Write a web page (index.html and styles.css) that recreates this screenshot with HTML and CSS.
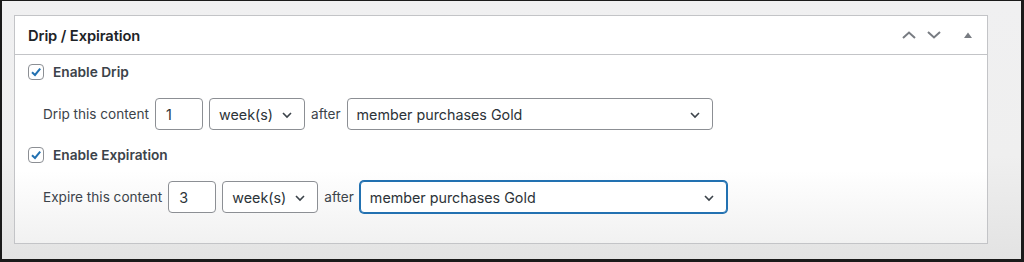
FILE: index.html
```html
<!DOCTYPE html>
<html>
<head>
<meta charset="utf-8">
<link rel="stylesheet" href="styles.css">
</head>
<body>
<div class="frame">
  <div class="panel">
    <div class="panel-header">
      <h2 class="panel-title">Drip / Expiration</h2>
      <div class="panel-actions">
        <svg class="icon-chev" width="16" height="10" viewBox="0 0 16 10"><path d="M2 8 L8 2.5 L14 8" fill="none" stroke="#787c82" stroke-width="2"/></svg>
        <svg class="icon-chev" width="16" height="10" viewBox="0 0 16 10"><path d="M2 2 L8 7.5 L14 2" fill="none" stroke="#787c82" stroke-width="2"/></svg>
        <svg class="icon-tri" width="10" height="8" viewBox="0 0 10 8"><path d="M1 7 L5 1.5 L9 7 Z" fill="#787c82"/></svg>
      </div>
    </div>
    <div class="panel-body">
      <label class="check-row">
        <span class="checkbox"><svg width="12" height="12" viewBox="0 0 12 12"><path d="M2 6.2 L5 9 L10.2 2.6" fill="none" stroke="#2271b1" stroke-width="2"/></svg></span>
        <span class="check-label">Enable Drip</span>
      </label>
      <div class="field-row row-drip">
        <span class="field-text">Drip this content</span>
        <span class="num-input">1</span>
        <span class="select select-unit">week(s)<svg class="sel-arrow" width="12" height="8" viewBox="0 0 12 8"><path d="M2 2 L6 6 L10 2" fill="none" stroke="#3c434a" stroke-width="1.6"/></svg></span>
        <span class="field-text">after</span>
        <span class="select select-event">member purchases Gold<svg class="sel-arrow" width="12" height="8" viewBox="0 0 12 8"><path d="M2 2 L6 6 L10 2" fill="none" stroke="#3c434a" stroke-width="1.6"/></svg></span>
      </div>
      <label class="check-row check-second">
        <span class="checkbox"><svg width="12" height="12" viewBox="0 0 12 12"><path d="M2 6.2 L5 9 L10.2 2.6" fill="none" stroke="#2271b1" stroke-width="2"/></svg></span>
        <span class="check-label">Enable Expiration</span>
      </label>
      <div class="field-row row-expire">
        <span class="field-text">Expire this content</span>
        <span class="num-input">3</span>
        <span class="select select-unit">week(s)<svg class="sel-arrow" width="12" height="8" viewBox="0 0 12 8"><path d="M2 2 L6 6 L10 2" fill="none" stroke="#3c434a" stroke-width="1.6"/></svg></span>
        <span class="field-text">after</span>
        <span class="select select-event focused">member purchases Gold<svg class="sel-arrow" width="12" height="8" viewBox="0 0 12 8"><path d="M2 2 L6 6 L10 2" fill="none" stroke="#3c434a" stroke-width="1.6"/></svg></span>
      </div>
    </div>
  </div>
</div>
</body>
</html>
```
FILE: styles.css
```css
* { box-sizing: border-box; }
html, body { margin: 0; padding: 0; }
body {
  width: 1024px;
  height: 262px;
  background: #111;
  font-family: Inter, "Liberation Sans", Arial, sans-serif;
  color: #3c434a;
  overflow: hidden;
}
.frame {
  width: 1024px;
  height: 262px;
  border-style: solid;
  border-color: #1a1a1a;
  border-width: 1px 3px 3px 2px;
  background: linear-gradient(to bottom, #f0f0f1 0%, #efefef 60%, #e3e3e3 100%);
  padding: 14px 0 0 12px;
}
.panel {
  width: 974px;
  height: 229px;
  border: 1px solid #c3c4c7;
  background: linear-gradient(to bottom, #ffffff 0%, #ffffff 68%, #f1f1f1 100%);
  display: flex;
  flex-direction: column;
}
.panel-header {
  height: 39px;
  border-bottom: 1px solid #c3c4c7;
  display: flex;
  align-items: center;
  justify-content: space-between;
  padding: 0 14px 0 13px;
}
.panel-title {
  margin: 0;
  font-size: 14.7px;
  font-weight: 600;
  color: #1d2327;
  letter-spacing: -0.1px;
  padding-top: 1px;
}
.panel-actions {
  display: flex;
  align-items: center;
  gap: 9px;
}
.icon-tri { margin-left: 12px; }
.panel-body {
  padding: 9px 12px 0 13px;
  display: flex;
  flex-direction: column;
}
.check-row {
  display: flex;
  align-items: center;
  height: 16px;
  gap: 9px;
}
.check-second { margin-top: 17px; }
.checkbox {
  width: 16px;
  height: 16px;
  border: 1px solid #8c8f94;
  border-radius: 4px;
  background: #fff;
  display: flex;
  align-items: center;
  justify-content: center;
}
.check-label {
  font-size: 13.7px;
  font-weight: 600;
  color: #3c434a;
}
.field-row {
  display: flex;
  align-items: center;
  gap: 6px;
  padding-left: 15px;
  margin-top: 18px;
  height: 32px;
}
.row-expire { margin-top: 18px; }
.field-text {
  font-size: 13.6px;
  color: #3c434a;
}
.num-input, .select {
  height: 32px;
  border: 1px solid #8c8f94;
  border-radius: 4px;
  background: #fff;
  font-size: 14.3px;
  color: #2c3338;
  display: flex;
  align-items: center;
  padding-left: 9px;
}
.num-input { width: 48px; padding-left: 10px; }
.select { position: relative; }
.sel-arrow { position: absolute; right: 11px; top: 12px; }
.select-unit { width: 96px; }
.select-event { width: 366px; }
.select-event.focused {
  border-color: #2271b1;
  box-shadow: 0 0 0 1px #2271b1;
  width: 367px;
}
```
